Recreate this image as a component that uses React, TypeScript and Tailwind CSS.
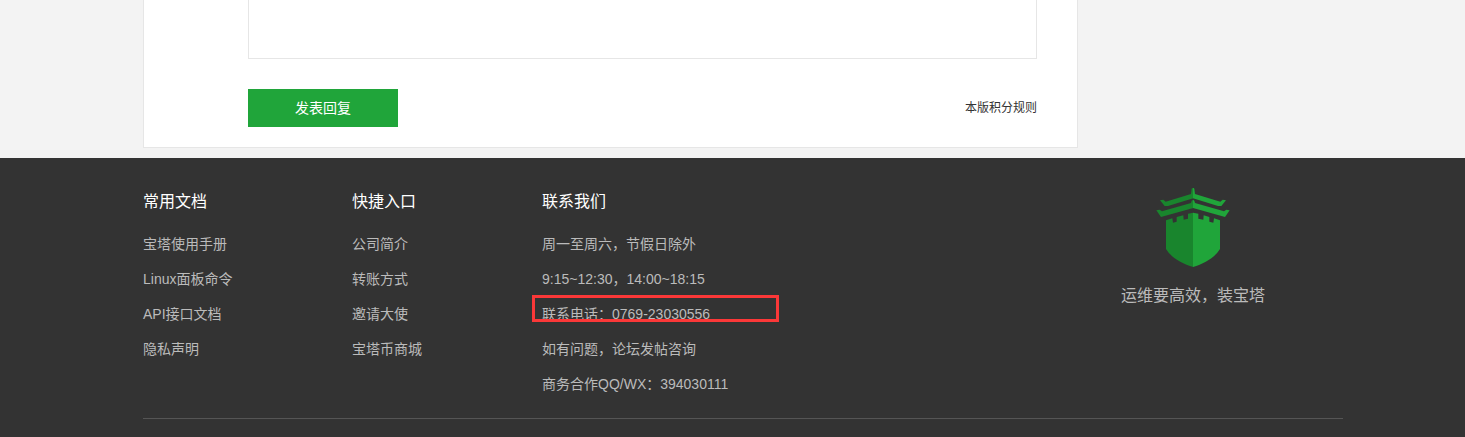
const docs = ["宝塔使用手册", "Linux面板命令", "API接口文档", "隐私声明"];
const entries = ["公司简介", "转账方式", "邀请大使", "宝塔币商城"];

function LinkColumn({ title, links }: { title: string; links: string[] }) {
  return (
    <nav aria-label={title} className="pt-0.5">
      <h2 className="text-base leading-6 text-white">{title}</h2>
      <ul className="mt-[13px] text-sm leading-[35px]">
        {links.map((link) => (
          <li key={link}>
            <a href="#" className="hover:text-white">
              {link}
            </a>
          </li>
        ))}
      </ul>
    </nav>
  );
}

function Logo() {
  return (
    <svg viewBox="48 30 222 237" className="h-[79px] w-[74px]" aria-hidden="true">
      <g fill="#19852d">
        <path d="M160 28 L155 32 L153 48 L77 71 L70 65 L60 67 L74 84 L84 84 L160 61 Z" />
        <path d="M160 65 L155 68 L153 75 L66 100 L59 95 L49 97 L63 117 L160 90 Z" />
        <path d="M160 104 L144 107 L144 122 L131 125 L130 112 L110 117 L110 131 L99 134 L97 121 L78 127 L78 213 C94 239 125 257 160 267 Z" />
      </g>
      <g fill="#20a53a">
        <path d="M159 28 L163 32 L165 48 L241 71 L248 65 L258 67 L244 84 L234 84 L159 61 Z" />
        <path d="M159 65 L163 68 L165 75 L252 100 L259 95 L269 97 L255 117 L159 90 Z" />
        <path d="M159 104 L175 107 L175 122 L190 125 L191 112 L208 117 L208 131 L220 134 L222 121 L240 127 L240 213 C224 239 193 257 159 267 Z" />
      </g>
    </svg>
  );
}

export default function App() {
  return (
    <div className="flex min-h-screen flex-col bg-[#f3f3f3] font-['Liberation_Sans','Noto_Sans_CJK_SC',sans-serif]">
      <main className="pb-2.5 pl-[21px]">
        <div className="mx-auto max-w-[1200px]">
          <form
            className="max-w-[935px] border border-t-0 border-[#e6e6e6] bg-white pr-10 pb-5 pl-[104px]"
            onSubmit={(e) => e.preventDefault()}
          >
            <textarea
              aria-label="回复内容"
              className="block h-[59px] w-full resize-none border border-t-0 border-[#e6e6e6] px-3 text-sm outline-none"
            />
            <div className="mt-[30px] flex items-center justify-between">
              <button type="submit" className="h-[38px] w-[150px] bg-[#20a53a] text-sm text-white">
                发表回复
              </button>
              <a href="#" className="text-xs text-[#333]">
                本版积分规则
              </a>
            </div>
          </form>
        </div>
      </main>
      <footer className="flex-1 bg-[#333] pt-[30px] pl-[21px] text-[#bbb]">
        <div className="mx-auto grid max-w-[1200px] grid-cols-[209px_190px_1fr_300px] border-b border-[#555] pb-4">
          <LinkColumn title="常用文档" links={docs} />
          <LinkColumn title="快捷入口" links={entries} />
          <section className="pt-0.5">
            <h2 className="text-base leading-6 text-white">联系我们</h2>
            <ul className="mt-[13px] text-sm leading-[35px]">
              <li>周一至周六，节假日除外</li>
              <li>9:15~12:30，14:00~18:15</li>
              <li className="relative">
                联系电话：0769-23030556
                <span className="absolute -top-0.5 -left-2.5 h-[27px] w-[247px] border-3 border-[#fb3838]" />
              </li>
              <li>如有问题，论坛发帖咨询</li>
              <li>商务合作QQ/WX：394030111</li>
            </ul>
          </section>
          <div className="flex flex-col items-center">
            <Logo />
            <p className="mt-[17px] text-base leading-6">运维要高效，装宝塔</p>
          </div>
        </div>
      </footer>
    </div>
  );
}
